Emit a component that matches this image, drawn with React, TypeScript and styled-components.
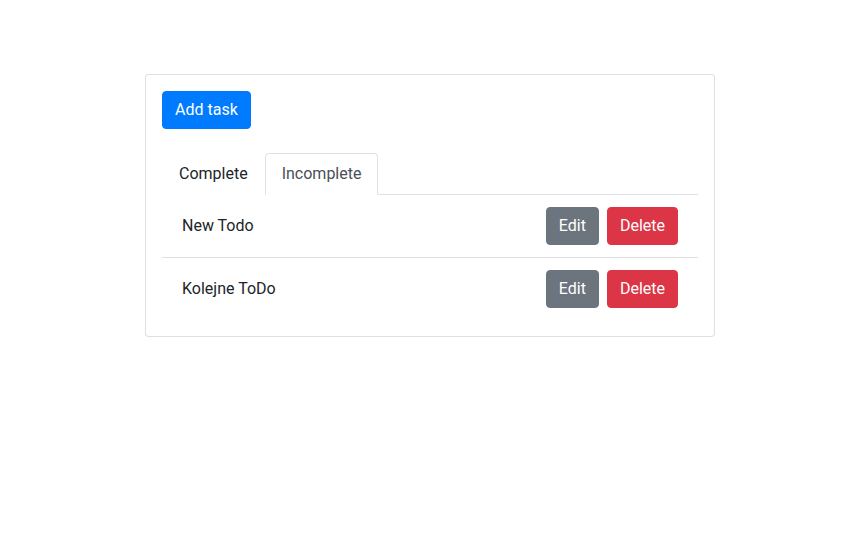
import React, { useState } from "react";
import styled, { createGlobalStyle } from "styled-components";

const Global = createGlobalStyle`
  html, body { margin: 0; padding: 0; background: #fff; }
  body {
    font-family: "Segoe UI", Roboto, "Helvetica Neue", Arial, "Noto Sans", sans-serif;
    font-size: 16px;
    line-height: 1.5;
    color: #212529;
  }
  * { box-sizing: border-box; }
`;

const Page = styled.div`
  padding: 74px 0 0 145px;
`;

const Card = styled.div`
  width: 570px;
  border: 1px solid rgba(0, 0, 0, 0.125);
  border-radius: 4px;
  padding: 16px;
  background: #fff;
`;

const Button = styled.button<{ $variant: "primary" | "secondary" | "danger" }>`
  font-family: inherit;
  font-size: 16px;
  line-height: 24px;
  padding: 6px 12px;
  border-radius: 4px;
  border: 1px solid transparent;
  color: #fff;
  cursor: pointer;
  background: ${(p) =>
    p.$variant === "primary" ? "#007bff" : p.$variant === "secondary" ? "#6c757d" : "#dc3545"};
  border-color: ${(p) =>
    p.$variant === "primary" ? "#007bff" : p.$variant === "secondary" ? "#6c757d" : "#dc3545"};
`;

const Tabs = styled.div`
  display: flex;
  margin-top: 24px;
  border-bottom: 1px solid #dee2e6;
`;

const Tab = styled.button<{ $active?: boolean }>`
  font-family: inherit;
  font-size: 16px;
  line-height: 24px;
  padding: 8px 16px;
  margin-bottom: -1px;
  background: #fff;
  border: 1px solid transparent;
  border-color: ${(p) => (p.$active ? "#dee2e6 #dee2e6 #fff" : "transparent")};
  border-top-left-radius: 4px;
  border-top-right-radius: 4px;
  color: ${(p) => (p.$active ? "#495057" : "#212529")};
  cursor: pointer;
`;

const List = styled.ul`
  list-style: none;
  margin: 0;
  padding: 0;
`;

const Item = styled.li`
  display: flex;
  align-items: center;
  justify-content: space-between;
  padding: 12px 20px;
  border-bottom: 1px solid rgba(0, 0, 0, 0.125);
  &:last-child { border-bottom: none; }
`;

const Actions = styled.div`
  display: flex;
  gap: 8px;
`;

export default function App() {
  const [tab, setTab] = useState("incomplete");
  const todos = ["New Todo", "Kolejne ToDo"];
  return (
    <>
      <Global />
      <Page>
        <Card>
          <Button $variant="primary">Add task</Button>
          <Tabs>
            <Tab $active={tab === "complete"} onClick={() => setTab("complete")}>Complete</Tab>
            <Tab $active={tab === "incomplete"} onClick={() => setTab("incomplete")}>Incomplete</Tab>
          </Tabs>
          <List>
            {todos.map((t) => (
              <Item key={t}>
                <span>{t}</span>
                <Actions>
                  <Button $variant="secondary">Edit</Button>
                  <Button $variant="danger">Delete</Button>
                </Actions>
              </Item>
            ))}
          </List>
        </Card>
      </Page>
    </>
  );
}
